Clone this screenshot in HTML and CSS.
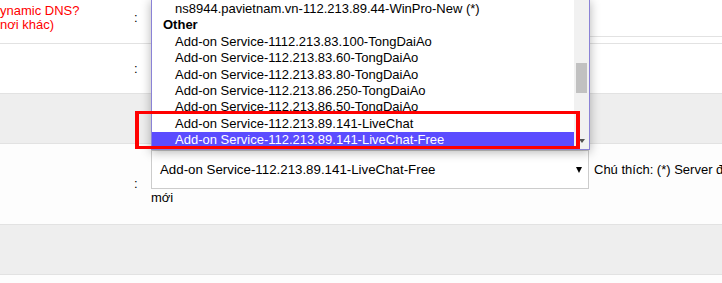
FILE: index.html
```html
<!DOCTYPE html>
<html>
    <head>
        <meta charset="utf-8">
        <link rel="stylesheet" href="styles.css">
    </head>
    <body>
        <div class="form">
            <div class="row r1">
                <div class="label warn">ynamic DNS?<br>nơi khác)</div>
                <div class="colon">:</div>
                <div class="value"><div class="rule"></div></div>
            </div>
            <div class="row r2">
                <div class="label"></div>
                <div class="colon">:</div>
                <div class="value"></div>
            </div>
            <div class="row shade r3"></div>
            <div class="row r4">
                <div class="label"></div>
                <div class="colon">:</div>
                <div class="value">
                    <div class="line">
                        <div class="pick">
                            <span>Add-on Service-112.213.89.141-LiveChat-Free</span>
                            <i class="caret"></i>
                        </div>
                        <span class="note">Chú thích: (*) Server đang được sử dụng, hãy chọn server</span>
                    </div>
                    <div class="more">mới</div>
                </div>
            </div>
            <div class="row shade r5"></div>
            <div class="row r6"></div>
        </div>

        <div class="listbox">
            <ul class="opts">
                <li>ns8944.pavietnam.vn-112.213.89.44-WinPro-New (*)</li>
                <li class="group">Other</li>
                <li>Add-on Service-1112.213.83.100-TongDaiAo</li>
                <li>Add-on Service-112.213.83.60-TongDaiAo</li>
                <li>Add-on Service-112.213.83.80-TongDaiAo</li>
                <li>Add-on Service-112.213.86.250-TongDaiAo</li>
                <li>Add-on Service-112.213.86.50-TongDaiAo</li>
                <li>Add-on Service-112.213.89.141-LiveChat</li>
                <li class="sel">Add-on Service-112.213.89.141-LiveChat-Free</li>
            </ul>
            <div class="track">
                <div class="thumb"></div>
                <i class="down"></i>
            </div>
        </div>

        <div class="callout"></div>
    </body>
</html>
```

FILE: styles.css
```css
body {
    margin: 0;
    padding: 0;
    font-family: "Liberation Sans", Arial, sans-serif;
    font-size: 13px;
    color: #000;
    background: #fdfdfd;
    overflow: hidden;
    width: 722px;
    height: 283px;
    position: relative;
}

.row {
    display: flex;
    border-bottom: 1px solid #e2e2e2;
    background: #fff;
    box-sizing: border-box;
}
.row.shade { background: #eeeeee; }

.r1 { height: 44px; }
.r2 { height: 50px; }
.r3 { height: 50px; }
.r4 { height: 81px; background: #fdfdfd; }
.r5 { height: 50px; }
.r6 { height: 20px; border-bottom: 0; background: #fdfdfd; }

.label {
    width: 134px;
    flex: none;
    align-self: center;
    white-space: nowrap;
    overflow: hidden;
}
.warn {
    color: #ff0000;
    line-height: 14px;
    margin-top: -8px;
}

.colon {
    width: 17px;
    flex: none;
    align-self: center;
    line-height: 16px;
}
.r1 .colon { margin-top: -7px; }

.value { flex: 1; min-width: 0; }

.rule {
    height: 37px;
    border-bottom: 1px solid #e2e2e2;
    box-sizing: border-box;
}

.r4 .value { padding-top: 6px; }
.line {
    display: flex;
    align-items: center;
    gap: 5px;
    white-space: nowrap;
}
.pick {
    width: 438px;
    height: 39px;
    box-sizing: border-box;
    border: 1px solid #cccccc;
    background: #fff;
    display: flex;
    align-items: center;
    padding: 0 6px 0 8px;
    flex: none;
    font-size: 13.3px;
}
.caret {
    margin-left: auto;
    width: 0;
    height: 0;
    border-left: 3px solid transparent;
    border-right: 3px solid transparent;
    border-top: 6px solid #000;
}
.more { line-height: 16px; margin-top: 1px; }

/* open dropdown lying over the form */
.listbox {
    position: absolute;
    left: 151px;
    top: -1px;
    width: 439px;
    box-sizing: border-box;
    border: 1px solid #8a82d6;
    background: #fff;
    display: flex;
    box-shadow: 0 2px 10px rgba(0, 0, 0, 0.3);
}
.opts {
    list-style: none;
    margin: 0;
    padding: 1px 0 0 0;
    flex: 1;
}
.opts li {
    line-height: 16.4px;
    height: 16.4px;
    padding-left: 23px;
    white-space: nowrap;
}
.opts li.group { font-weight: bold; padding-left: 11px; }
.opts li.sel { background: #5b4cff; color: #fff; }

.track {
    width: 15px;
    flex: none;
    background: #f1f1f1;
    display: flex;
    flex-direction: column;
    align-items: center;
    padding-top: 63px;
    padding-bottom: 6px;
}
.thumb {
    width: 11px;
    height: 30px;
    background: #c1c1c1;
}
.down {
    margin-top: auto;
    width: 0;
    height: 0;
    border-left: 3px solid transparent;
    border-right: 3px solid transparent;
    border-top: 4px solid #505050;
}

.callout {
    position: absolute;
    left: 135px;
    top: 111px;
    width: 445px;
    height: 38px;
    box-sizing: border-box;
    border: 3px solid #ff0000;
    border-left-width: 4px;
    border-right-width: 4px;
}
```
